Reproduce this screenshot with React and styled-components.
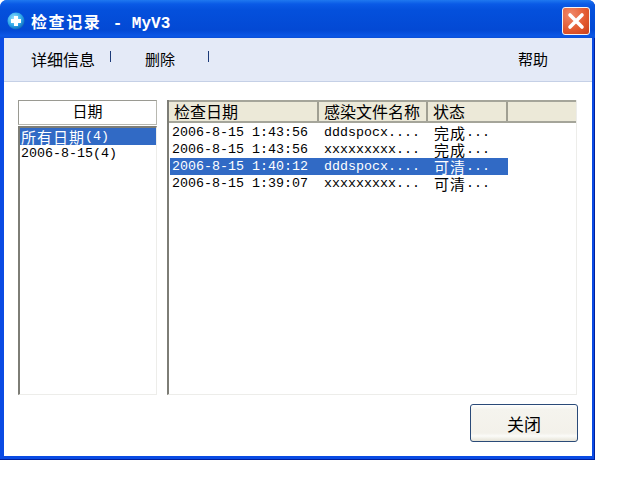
import React from 'react';
import styled, { createGlobalStyle } from 'styled-components';

const MONO = '"Liberation Mono", "Noto Sans CJK SC", monospace';

const GlobalStyle = createGlobalStyle`
  html, body {
    margin: 0;
    padding: 0;
    background: #fff;
  }
`;

const Win = styled.div`
  width: 595px;
  height: 460px;
  box-sizing: border-box;
  display: flex;
  flex-direction: column;
  background: #0a4be4;
  box-shadow: inset -1px -1px 0 #00209c;
  border-radius: 7px 7px 0 0;
  font-family: ${MONO};
  color: #000;
  overflow: hidden;
`;

const TitleBar = styled.div`
  height: 38px;
  flex: none;
  box-sizing: border-box;
  display: flex;
  align-items: center;
  padding: 3px 5px 0 7px;
  background: linear-gradient(#1f78f0 0, #0a5ae6 4px, #0450dc 10px, #0349d4 30px, #0b57e6 36px, #0b4fd6 38px);
`;

const TitleText = styled.span`
  margin-left: 6px;
  font-size: 16px;
  font-weight: 700;
  color: #fff;
  letter-spacing: 1.6px;
  white-space: pre;
  font-family: "Noto Sans CJK SC", sans-serif;
`;

const TitleLatin = styled.span`
  margin-left: 6px;
  font-family: "Liberation Mono", monospace;
  font-size: 16px;
  letter-spacing: 0;
`;

const CloseBtn = styled.div`
  margin-left: auto;
  width: 28px;
  height: 28px;
  box-sizing: border-box;
  border: 1px solid #f4f4f4;
  border-radius: 3px;
  background: radial-gradient(circle at 30% 25%, #f0886a, #e2582e 60%, #c8401c);
  display: flex;
  align-items: center;
  justify-content: center;
`;

const Client = styled.div`
  flex: 1;
  margin: 0 3px 4px 4px;
  background: #fff;
  display: flex;
  flex-direction: column;
  min-height: 0;
`;

const Toolbar = styled.div`
  height: 44px;
  flex: none;
  box-sizing: border-box;
  display: flex;
  align-items: center;
  padding: 0 0 2px 27px;
  background: #e4eaf7;
  border-bottom: 1px solid #c5d0e6;
  font-size: 16px;
  font-family: "Noto Sans CJK SC", sans-serif;
`;

const ToolItem = styled.span`
  margin-left: ${(p) => p.$ml || 0}px;
  width: ${(p) => p.$w}px;
  font-size: ${(p) => p.$size || 16}px;
  line-height: 20px;
  white-space: nowrap;
`;

const Sep = styled.span`
  width: 1px;
  height: 11px;
  margin-top: -5px;
  background: #1c3a78;
  flex: none;
`;

const HelpItem = styled.span`
  margin-left: auto;
  margin-right: 44px;
  font-size: 15px;
`;

const Body = styled.div`
  flex: 1;
  display: flex;
  flex-direction: column;
  padding: 18px 15px 14px 14px;
  min-height: 0;
`;

const Panes = styled.div`
  display: flex;
  gap: 10px;
  height: 295px;
`;

const LeftPane = styled.div`
  width: 139px;
  display: flex;
  flex-direction: column;
`;

const DateHead = styled.div`
  height: 25px;
  box-sizing: border-box;
  border: 1px solid #9a9a92;
  border-right-color: #b8b8b0;
  border-bottom-color: #b8b8b0;
  text-align: center;
  font-size: 15px;
  line-height: 19px;
  font-family: "Noto Sans CJK SC", sans-serif;
`;

const ListBox = styled.div`
  flex: 1;
  margin-top: 1px;
  box-sizing: border-box;
  border: 2px solid #7d7d76;
  border-right: 1px solid #ededea;
  border-bottom: 1px solid #ededea;
`;

const ListRow = styled.div`
  display: flex;
  align-items: center;
  height: 17px;
  padding-left: 1px;
  line-height: 17px;
  font-size: 13.33px;
  white-space: pre;
  background: ${(p) => (p.$on ? '#316ac5' : 'transparent')};
  color: ${(p) => (p.$on ? '#fff' : '#000')};
`;

const Han = styled.span`
  font-family: "Noto Sans CJK SC", sans-serif;
  font-size: 15px;
  letter-spacing: 1px;
  line-height: 17px;
`;

const RightPane = styled.div`
  flex: 1;
  display: flex;
  flex-direction: column;
  box-sizing: border-box;
  border-left: 2px solid #7d7d76;
  border-bottom: 1px solid #ededea;
  border-right: 1px solid #ededea;
`;

const HeadRow = styled.div`
  height: 23px;
  flex: none;
  box-sizing: border-box;
  display: flex;
  background: #ece9d8;
  border-top: 2px solid #a5a59a;
  border-bottom: 2px solid #a5a59a;
`;

const HeadCell = styled.div`
  width: ${(p) => p.$w}px;
  flex: none;
  box-sizing: border-box;
  padding-left: ${(p) => p.$pad}px;
  border-right: 2px solid #a09f92;
  font-size: 16px;
  line-height: 19px;
  white-space: nowrap;
  font-family: "Noto Sans CJK SC", sans-serif;
`;

const Rows = styled.div`
  padding: 1px 0 0 1px;
  width: 338px;
`;

const DataRow = styled.div`
  display: flex;
  height: 17px;
  padding-left: 2px;
  line-height: 17px;
  font-size: 13.33px;
  white-space: pre;
  background: ${(p) => (p.$on ? '#316ac5' : 'transparent')};
  color: ${(p) => (p.$on ? '#fff' : '#000')};
`;

const DataCell = styled.span`
  display: flex;
  align-items: center;
  width: ${(p) => p.$w}px;
  flex: none;
`;

const Footer = styled.div`
  display: flex;
  justify-content: flex-end;
  margin-top: 9px;
  margin-right: -1px;
`;

const CloseButton = styled.button`
  width: 108px;
  height: 38px;
  box-sizing: border-box;
  border: 1px solid #2a4a78;
  border-radius: 3px;
  background: linear-gradient(#ffffff 0, #f5f4ee 12%, #f3f1ea 78%, #fbfbf8 86%, #e6e3d6 100%);
  font-family: "Noto Sans CJK SC", sans-serif;
  font-size: 17px;
  color: #000;
  padding: 0;
`;

const records = [
  { time: '2006-8-15 1:43:56', file: 'dddspocx....', state: '完成' },
  { time: '2006-8-15 1:43:56', file: 'xxxxxxxxx...', state: '完成' },
  { time: '2006-8-15 1:40:12', file: 'dddspocx....', state: '可清', on: true },
  { time: '2006-8-15 1:39:07', file: 'xxxxxxxxx...', state: '可清' },
];

const App = () => (
  <>
    <GlobalStyle />
    <Win>
      <TitleBar>
        <svg width="18" height="18" viewBox="0 0 18 18">
          <defs>
            <radialGradient id="ball" cx="40%" cy="35%" r="70%">
              <stop offset="0" stopColor="#9fe6ff" />
              <stop offset="0.6" stopColor="#2fa8ea" />
              <stop offset="1" stopColor="#0a5fb4" />
            </radialGradient>
          </defs>
          <circle cx="9" cy="9" r="8.5" fill="url(#ball)" />
          <path d="M7 4h4v3h3v4h-3v3H7v-3H4V7h3z" fill="#fff" />
        </svg>
        <TitleText>
          检查记录 <TitleLatin>- MyV3</TitleLatin>
        </TitleText>
        <CloseBtn>
          <svg width="18" height="18" viewBox="0 0 18 18">
            <path d="M3 3l12 12M15 3L3 15" stroke="#fff" strokeWidth="3.6" strokeLinecap="round" />
          </svg>
        </CloseBtn>
      </TitleBar>
      <Client>
        <Toolbar>
          <ToolItem $w={79}>详细信息</ToolItem>
          <Sep />
          <ToolItem $w={63} $ml={34} $size={15}>删除</ToolItem>
          <Sep />
          <HelpItem>帮助</HelpItem>
        </Toolbar>
        <Body>
          <Panes>
            <LeftPane>
              <DateHead>日期</DateHead>
              <ListBox>
                <ListRow $on><Han>所有日期</Han>(4)</ListRow>
                <ListRow>2006-8-15(4)</ListRow>
              </ListBox>
            </LeftPane>
            <RightPane>
              <HeadRow>
                <HeadCell $w={150} $pad={5}>检查日期</HeadCell>
                <HeadCell $w={109} $pad={5}>感染文件名称</HeadCell>
                <HeadCell $w={80} $pad={5}>状态</HeadCell>
              </HeadRow>
              <Rows>
                {records.map((r) => (
                  <DataRow key={r.time} $on={r.on}>
                    <DataCell $w={152}>{r.time}</DataCell>
                    <DataCell $w={110}>{r.file}</DataCell>
                    <DataCell $w={74}><Han>{r.state}</Han>...</DataCell>
                  </DataRow>
                ))}
              </Rows>
            </RightPane>
          </Panes>
          <Footer>
            <CloseButton>关闭</CloseButton>
          </Footer>
        </Body>
      </Client>
    </Win>
  </>
);

export default App;
